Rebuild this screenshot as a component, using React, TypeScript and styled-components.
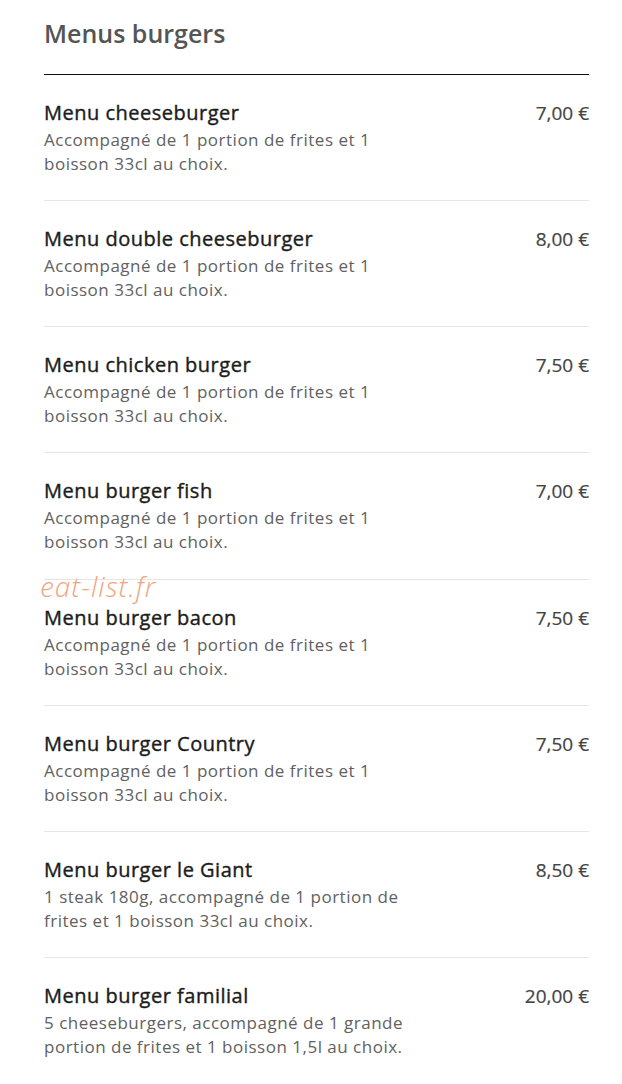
import styled, { createGlobalStyle } from "styled-components";

const GlobalStyle = createGlobalStyle`
  body {
    margin: 0;
    background: #fff;
    font-family: "Open Sans", "Liberation Sans", sans-serif;
  }
`;

const Page = styled.div`
  position: relative;
  width: 545px;
  margin-left: 44px;
`;

const Heading = styled.h2`
  margin: 0;
  padding-top: 15px;
  font-size: 25px;
  line-height: 36px;
  font-weight: 600;
  color: #555;
`;

const Rule = styled.div`
  margin-top: 23px;
  height: 1px;
  background: #111;
`;

const Item = styled.div<{ $last?: boolean }>`
  display: flex;
  justify-content: space-between;
  align-items: flex-start;
  padding: 26px 0 24.15px;
  margin-top: -1px;
  border-bottom: 1px solid ${(p) => (p.$last ? "transparent" : "#e6e6e6")};
  &:first-of-type {
    margin-top: 0;
  }
`;

const Info = styled.div`
  max-width: 372px;
`;

const Name = styled.div`
  font-size: 20px;
  line-height: 26px;
  font-weight: 400;
  letter-spacing: 0.5px;
  color: #1c1c1c;
  -webkit-text-stroke: 0.4px #1c1c1c;
`;

const Desc = styled.div`
  margin-top: 2px;
  font-size: 17px;
  line-height: 24px;
  letter-spacing: 0.5px;
  color: #616161;
`;

const Price = styled.div`
  font-size: 19px;
  line-height: 26px;
  color: #444;
  -webkit-text-stroke: 0.2px #444;
  white-space: nowrap;
`;

const Watermark = styled.div`
  position: absolute;
  left: -4px;
  top: 568px;
  font-size: 28px;
  line-height: 36px;
  letter-spacing: 1px;
  font-style: italic;
  font-weight: 300;
  color: #f2a47e;
  pointer-events: none;
`;

const std = "Accompagné de 1 portion de frites et 1 boisson 33cl au choix.";

const items = [
  { name: "Menu cheeseburger", desc: std, price: "7,00 €" },
  { name: "Menu double cheeseburger", desc: std, price: "8,00 €" },
  { name: "Menu chicken burger", desc: std, price: "7,50 €" },
  { name: "Menu burger fish", desc: std, price: "7,00 €" },
  { name: "Menu burger bacon", desc: std, price: "7,50 €" },
  { name: "Menu burger Country", desc: std, price: "7,50 €" },
  {
    name: "Menu burger le Giant",
    desc: "1 steak 180g, accompagné de 1 portion de frites et 1 boisson 33cl au choix.",
    price: "8,50 €",
  },
  {
    name: "Menu burger familial",
    desc: "5 cheeseburgers, accompagné de 1 grande portion de frites et 1 boisson 1,5l au choix.",
    price: "20,00 €",
  },
];

export default function App() {
  return (
    <>
      <GlobalStyle />
      <Page>
        <Heading>Menus burgers</Heading>
        <Rule />
        {items.map((it, i) => (
          <Item key={it.name} $last={i === items.length - 1}>
            <Info>
              <Name>{it.name}</Name>
              <Desc>{it.desc}</Desc>
            </Info>
            <Price>{it.price}</Price>
          </Item>
        ))}
        <Watermark>eat-list.fr</Watermark>
      </Page>
    </>
  );
}
